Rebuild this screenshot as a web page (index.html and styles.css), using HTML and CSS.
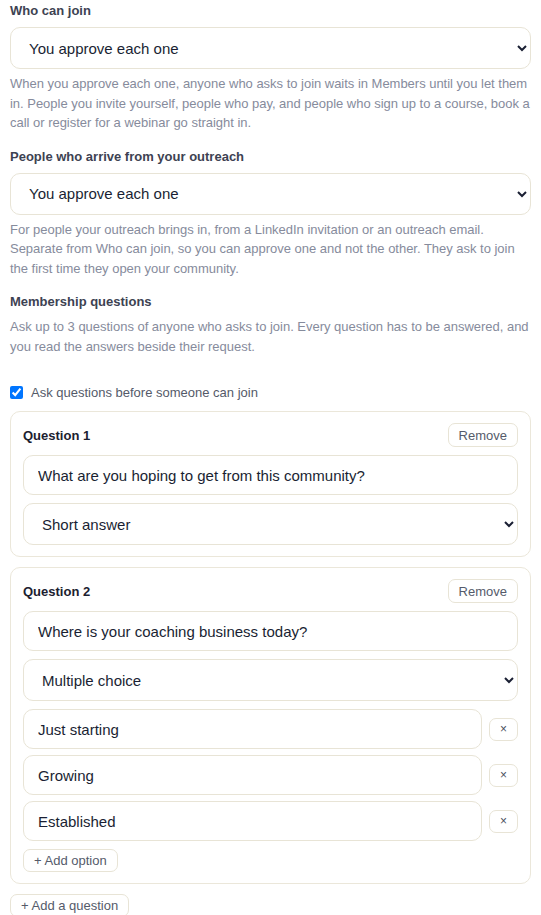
FILE: index.html
```html
<!DOCTYPE html>
<html lang="en">
<head>
<meta charset="utf-8">
<title>Join settings</title>
<link rel="stylesheet" href="styles.css">
</head>
<body>
<div class="page">
  <section class="field">
    <label class="field-label" for="who">Who can join</label>
    <select id="who" class="control select">
      <option>You approve each one</option>
    </select>
    <p class="help">When you approve each one, anyone who asks to join waits in Members until you let them in. People you invite yourself, people who pay, and people who sign up to a course, book a call or register for a webinar go straight in.</p>
  </section>

  <section class="field">
    <label class="field-label" for="outreach">People who arrive from your outreach</label>
    <select id="outreach" class="control select">
      <option>You approve each one</option>
    </select>
    <p class="help">For people your outreach brings in, from a LinkedIn invitation or an outreach email. Separate from Who can join, so you can approve one and not the other. They ask to join the first time they open your community.</p>
  </section>

  <section class="field">
    <div class="field-label field-label-tight">Membership questions</div>
    <p class="help help-tight">Ask up to 3 questions of anyone who asks to join. Every question has to be answered, and you read the answers beside their request.</p>
  </section>

  <label class="check-row">
    <input type="checkbox" checked>
    <span>Ask questions before someone can join</span>
  </label>

  <div class="card">
    <div class="card-head">
      <span class="card-title">Question 1</span>
      <button class="btn">Remove</button>
    </div>
    <input class="control input" type="text" value="What are you hoping to get from this community?">
    <select class="control select">
      <option>Short answer</option>
    </select>
  </div>

  <div class="card">
    <div class="card-head">
      <span class="card-title">Question 2</span>
      <button class="btn">Remove</button>
    </div>
    <input class="control input" type="text" value="Where is your coaching business today?">
    <select class="control select">
      <option>Multiple choice</option>
    </select>
    <div class="options">
      <div class="option-row">
        <input class="control input" type="text" value="Just starting">
        <button class="btn btn-x">×</button>
      </div>
      <div class="option-row">
        <input class="control input" type="text" value="Growing">
        <button class="btn btn-x">×</button>
      </div>
      <div class="option-row">
        <input class="control input" type="text" value="Established">
        <button class="btn btn-x">×</button>
      </div>
    </div>
    <div class="btn-line"><button class="btn btn-add">+ Add option</button></div>
  </div>

  <div class="btn-line"><button class="btn btn-add">+ Add a question</button></div>
</div>
</body>
</html>
```

FILE: styles.css
```css
* { box-sizing: border-box; }

html, body {
  margin: 0;
  padding: 0;
  background: #ffffff;
}

body {
  font-family: "Liberation Sans", Arial, sans-serif;
  color: #1c2233;
}

.page {
  padding: 1px 10px 0 10px;
}

.field {
  display: flex;
  flex-direction: column;
  margin-bottom: 14px;
}

.field-label {
  display: block;
  font-size: 13px;
  font-weight: bold;
  line-height: 20px;
  color: #3d4252;
  margin: 0 0 6px 0;
}

.field-label-tight {
  margin-bottom: 5px;
}

.control {
  display: block;
  width: 100%;
  font-family: "Liberation Sans", Arial, sans-serif;
  font-size: 15px;
  color: #1a1f33;
  background: #ffffff;
  border: 1px solid #e8e4d6;
  border-radius: 10px;
  outline: none;
  margin: 0;
}

.select {
  height: 42px;
  padding: 0 10px 0 14px;
}

.input {
  height: 40px;
  padding: 0 14px;
}

.help {
  margin: 5px 0 0 0;
  font-size: 13px;
  line-height: 19.5px;
  letter-spacing: -0.02px;
  color: #868b9c;
}

.help-tight {
  margin-top: 0;
}

.check-row {
  display: flex;
  align-items: center;
  gap: 8px;
  height: 20px;
  margin: 26px 0 9px 0;
  font-size: 13px;
  color: #545a69;
}

.check-row input {
  width: 13px;
  height: 13px;
  margin: 0;
}

.card {
  border: 1px solid #ebe7da;
  border-radius: 10px;
  padding: 11px 12px 11px 12px;
  display: flex;
  flex-direction: column;
  gap: 8px;
  margin-bottom: 10px;
}

.card-head {
  display: flex;
  align-items: center;
  justify-content: space-between;
  height: 24px;
}

.card-title {
  font-size: 13px;
  font-weight: bold;
  color: #1c2130;
}

.btn {
  font-family: "Liberation Sans", Arial, sans-serif;
  font-size: 13px;
  color: #555b6a;
  background: #ffffff;
  border: 1px solid #e8e4d6;
  border-radius: 7px;
  height: 24px;
  padding: 0 10px;
  margin: 0;
  cursor: pointer;
}

.options {
  display: flex;
  flex-direction: column;
  gap: 6px;
}

.option-row {
  display: flex;
  align-items: center;
  gap: 7px;
}

.option-row .input {
  flex: 1;
  width: auto;
}

.btn-x {
  width: 29px;
  height: 23px;
  padding: 0;
  font-size: 12px;
  color: #4a5060;
  flex: none;
}

.btn-line {
  display: flex;
}

.btn-add {
  height: 23px;
  padding: 0 10px;
}
```
